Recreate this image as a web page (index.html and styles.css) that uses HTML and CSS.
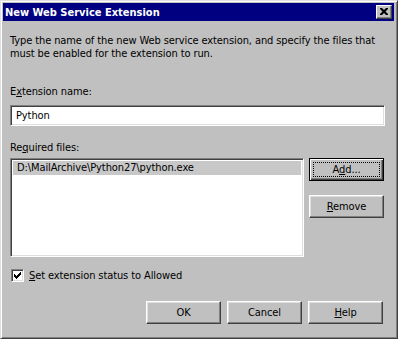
FILE: index.html
```html
<!DOCTYPE html>
<html>
<head>
<meta charset="utf-8">
<link rel="stylesheet" href="styles.css">
</head>
<body>
<div class="window">
  <div class="titlebar">
    <span class="title">New Web Service Extension</span>
    <span class="close"><svg width="8" height="7" viewBox="0 0 8 7"><path d="M0 0h2l2 2l2-2h2v1l-2.5 2.5l2.5 2.5v1h-2l-2-2l-2 2h-2v-1l2.5-2.5l-2.5-2.5z" fill="#000"/></svg></span>
  </div>
  <div class="content">
    <p class="desc">Type the name of the new Web service extension, and specify the files that must be enabled for the extension to run.</p>
    <div class="label lbl-name">E<u>x</u>tension name:</div>
    <div class="textbox">Python</div>
    <div class="label lbl-files">Re<u>q</u>uired files:</div>
    <div class="files-row">
      <div class="listbox">
        <div class="item selected">D:\MailArchive\Python27\python.exe</div>
      </div>
      <div class="side-buttons">
        <div class="btn default"><span class="focus">A<u>d</u>d...</span></div>
        <div class="btn"><span class="inner"><u>R</u>emove</span></div>
      </div>
    </div>
    <div class="check-row">
      <span class="checkbox"><svg width="7" height="7" viewBox="0 0 7 7"><path d="M0 2h1v1h1v1h1v-1h1v-1h1v-1h1v-1h1v3h-1v1h-1v1h-1v1h-1v1h-1v-1h-1v-1h-1z" fill="#000"/></svg></span>
      <span class="check-label"><u>S</u>et extension status to Allowed</span>
    </div>
    <div class="footer">
      <div class="btn"><span class="inner">OK</span></div>
      <div class="btn"><span class="inner">Cancel</span></div>
      <div class="btn"><span class="inner"><u>H</u>elp</span></div>
    </div>
  </div>
</div>
</body>
</html>
```

FILE: styles.css
```css
* { box-sizing: border-box; }
html, body { margin: 0; padding: 0; background: #c0c0c0; }
body {
  font-family: "DejaVu Sans Condensed", "Liberation Sans", sans-serif;
  font-size: 11px;
  line-height: 13px;
  letter-spacing: -0.1px;
  color: #000;
}
u { text-decoration: underline; text-underline-offset: 1px; }
.window {
  width: 398px;
  height: 339px;
  background: #c0c0c0;
  border: 1px solid;
  border-color: #dfdfdf #404040 #404040 #dfdfdf;
  box-shadow: inset 1px 1px #fff, inset -1px -1px #808080;
  padding: 2px 3px 2px 2px;
}
.titlebar {
  height: 18px;
  background: #000080;
  display: flex;
  align-items: center;
  justify-content: space-between;
  padding: 0 2px 0 2px;
}
.title {
  color: #fff;
  font-weight: bold;
  font-family: "DejaVu Sans Condensed", "Liberation Sans", sans-serif;
  font-size: 11px;
  letter-spacing: 0;
}
.close {
  width: 16px;
  height: 14px;
  background: #c0c0c0;
  border: 1px solid;
  border-color: #fff #404040 #404040 #fff;
  box-shadow: inset -1px -1px #808080;
  display: flex;
  align-items: center;
  justify-content: center;
  padding: 0 1px 1px 0;
}
.close svg { display: block; }
.content {
  padding: 13px 10px 0 7px;
}
.desc { margin: 0; }
.label { white-space: nowrap; }
.lbl-name { margin-top: 25px; }
.textbox {
  margin-top: 7px;
  height: 21px;
  width: 375px;
  background: #fff;
  border: 1px solid;
  border-color: #808080 #fff #fff #808080;
  box-shadow: inset 1px 1px #404040, inset -1px -1px #dfdfdf;
  padding: 3px 0 0 5px;
}
.lbl-files { margin-top: 15px; }
.files-row {
  margin-top: 4px;
  display: flex;
  gap: 5px;
}
.listbox {
  width: 294px;
  height: 99px;
  background: #fff;
  border: 1px solid;
  border-color: #808080 #fff #fff #808080;
  box-shadow: inset 1px 1px #404040, inset -1px -1px #dfdfdf;
  padding: 2px;
}
.item {
  height: 14px;
  padding-left: 4px;
  line-height: 14px;
  white-space: nowrap;
}
.item.selected { background: #c8c8c8; }
.side-buttons {
  display: flex;
  flex-direction: column;
  gap: 14px;
}
.btn {
  width: 75px;
  height: 23px;
  background: #c0c0c0;
  border: 1px solid;
  border-color: #fff #404040 #404040 #fff;
  box-shadow: inset -1px -1px #808080, inset 1px 1px #dfdfdf;
  display: flex;
  align-items: center;
  justify-content: center;
  padding-bottom: 1px;
}
.btn.default {
  border: 1px solid #000;
  box-shadow: inset 1px 1px #fff, inset -1px -1px #404040, inset -2px -2px #808080;
  padding: 3px;
}
.btn.default .focus {
  flex: 1;
  align-self: stretch;
  border: 1px dotted #000;
  display: flex;
  align-items: center;
  justify-content: center;
  padding-bottom: 1px;
}
.check-row {
  margin-top: 12px;
  display: flex;
  align-items: center;
  gap: 5px;
  padding-left: 1px;
}
.checkbox {
  width: 13px;
  height: 13px;
  background: #fff;
  border: 1px solid;
  border-color: #808080 #fff #fff #808080;
  box-shadow: inset 1px 1px #404040, inset -1px -1px #dfdfdf;
  display: flex;
  align-items: center;
  justify-content: center;
}
.checkbox svg { display: block; }
.footer {
  margin-top: 19px;
  display: flex;
  justify-content: flex-end;
  gap: 6px;
  padding-right: 1px;
}
```
